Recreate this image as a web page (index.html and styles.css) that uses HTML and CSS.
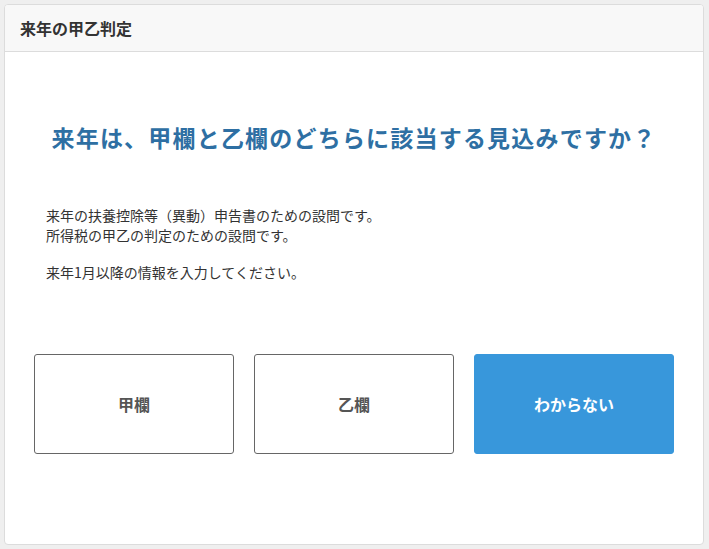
FILE: index.html
```html
<!DOCTYPE html>
<html lang="ja">
<head>
<meta charset="utf-8">
<link rel="stylesheet" href="styles.css">
</head>
<body>
<div class="card">
  <div class="card-header">来年の甲乙判定</div>
  <div class="card-body">
    <h1 class="question">来年は、甲欄と乙欄のどちらに該当する見込みですか？</h1>
    <div class="desc">
      <p>来年の扶養控除等（異動）申告書のための設問です。<br>所得税の甲乙の判定のための設問です。</p>
      <p>来年1月以降の情報を入力してください。</p>
    </div>
    <div class="choices">
      <button class="choice">甲欄</button>
      <button class="choice">乙欄</button>
      <button class="choice primary">わからない</button>
    </div>
  </div>
</div>
</body>
</html>
```
FILE: styles.css
```css
html, body {
  margin: 0;
  padding: 0;
}
body {
  background: #efefef;
  font-family: "Noto Sans CJK JP", "Noto Sans", sans-serif;
  color: #333;
  padding: 4px 5px 4px 4px;
}
.card {
  background: #fff;
  border: 1px solid #dcdcdc;
  border-radius: 4px;
  box-sizing: border-box;
  height: 541px;
  overflow: hidden;
}
.card-header {
  background: #f8f8f8;
  border-bottom: 1px solid #dcdcdc;
  box-sizing: border-box;
  height: 47px;
  padding-left: 15px;
  display: flex;
  align-items: center;
  font-size: 16px;
  font-weight: bold;
  color: #333;
}
.card-body {
  padding: 0 29px;
}
.question {
  margin: 67px 0 0;
  text-align: center;
  font-size: 23px;
  letter-spacing: 1.2px;
  font-weight: bold;
  color: #2e6fa3;
  line-height: 36px;
}
.desc {
  margin: 50px 0 0 12px;
  font-size: 14px;
  line-height: 20px;
}
.desc p {
  margin: 0 0 17px;
}
.choices {
  margin-top: 72px;
  display: flex;
  gap: 20px;
}
.choice {
  width: 200px;
  height: 100px;
  border: 1px solid #666;
  border-radius: 3px;
  background: #fff;
  font-family: inherit;
  font-size: 16px;
  font-weight: bold;
  color: #555;
  padding: 0;
}
.choice.primary {
  background: #3897db;
  border-color: #3897db;
  color: #fff;
}
```
